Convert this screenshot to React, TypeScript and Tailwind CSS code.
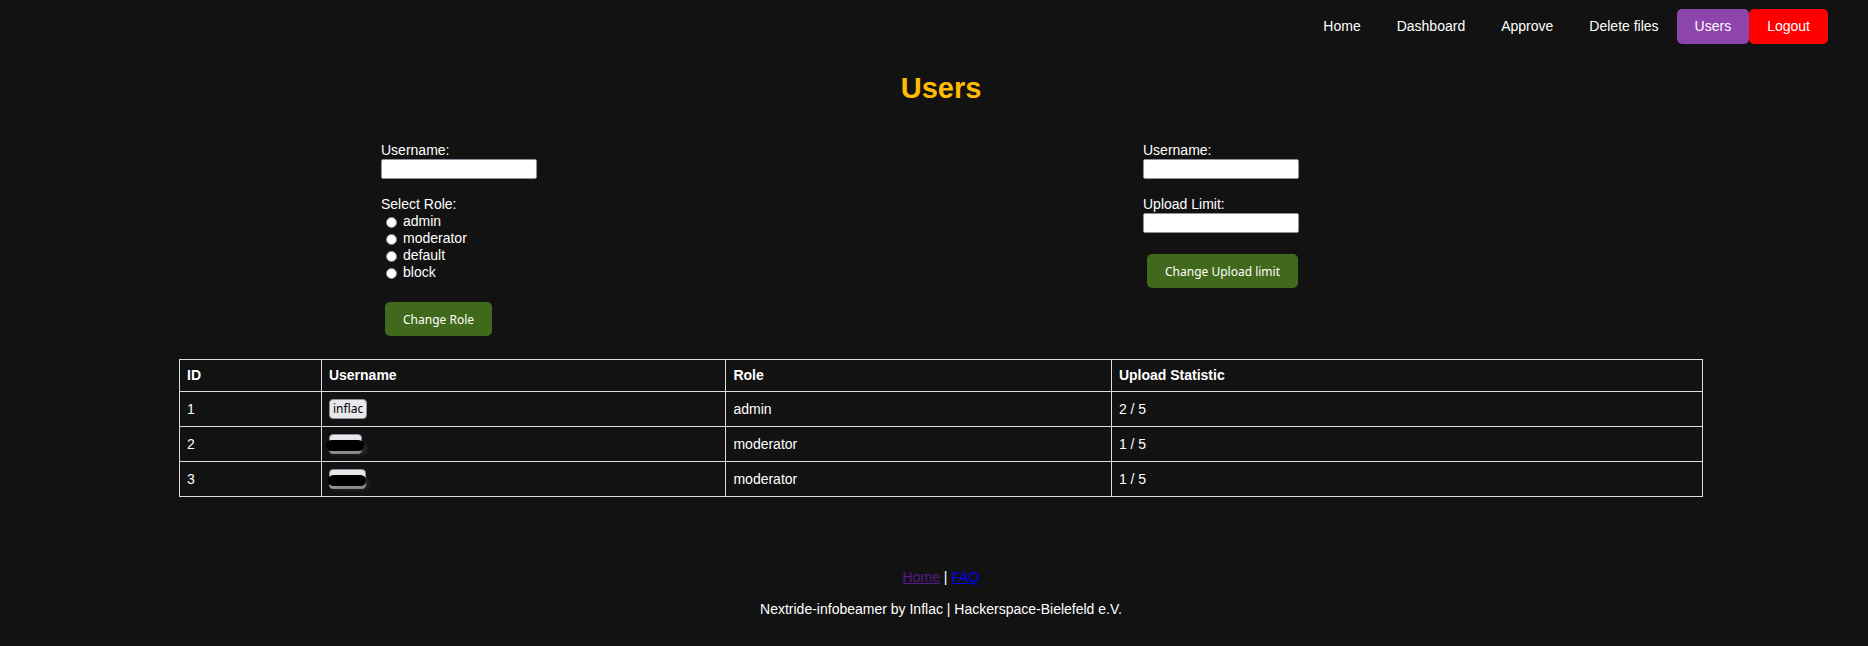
import type { ReactNode } from "react";

const links = ["Home", "Dashboard", "Approve", "Delete files"];
const roles = ["admin", "moderator", "default", "block"];

const field =
  "block h-5 w-[156px] rounded-[2px] border border-[#8f8f9d] bg-white px-1 text-[13px] text-black";

function SubmitButton({ children }: { children: ReactNode }) {
  return (
    <button
      type="submit"
      className="ml-1 h-[34px] rounded-[5px] bg-[#41691c] px-[18px] font-['Noto_Sans',sans-serif] text-[12px] text-white"
    >
      {children}
    </button>
  );
}

const userButton =
  "relative block h-5 rounded-[4px] border border-[#8f8f9d] font-['Noto_Sans',sans-serif] text-[12px] leading-[18px] text-black";

interface User {
  id: number;
  name: string;
  role: string;
  uploads: string;
  width?: string;
  bar?: string;
}

const users: User[] = [
  { id: 1, name: "inflac", role: "admin", uploads: "2 / 5" },
  { id: 2, name: "", role: "moderator", uploads: "1 / 5", width: "w-[33px]", bar: "-left-1 -right-[3px]" },
  { id: 3, name: "", role: "moderator", uploads: "1 / 5", width: "w-[37px]", bar: "-left-[2px] -right-px" },
];

function UserButton({ user }: { user: User }) {
  if (user.name) {
    return (
      <button type="button" className={userButton + " bg-[#e9e9ed] px-[3px]"}>
        {user.name}
      </button>
    );
  }
  return (
    <button
      type="button"
      aria-label="Concealed user"
      className={userButton + " bg-linear-to-b from-[#e9e9ed] from-30% to-[#a0a0a4] " + user.width}
    >
      <span
        className={
          "absolute top-[5px] h-[11px] rounded-full bg-black shadow-[3px_3px_4px_rgba(90,90,90,0.4)] " + user.bar
        }
      />
    </button>
  );
}

export default function App() {
  return (
    <div className="min-h-screen bg-[#121212] pl-3.5 font-['Liberation_Sans',Arial,sans-serif] text-[14px] leading-[17px] text-white">
      <nav className="flex justify-end pt-[9px] pr-10">
        {links.map((label) => (
          <a key={label} href="#" className="rounded-[5px] px-[18px] py-[9px]">
            {label}
          </a>
        ))}
        <a href="#" className="rounded-[5px] bg-[#8e44ad] px-[18px] py-[9px]">
          Users
        </a>
        <a href="#" className="rounded-[5px] bg-[#ff0000] px-[18px] py-[9px]">
          Logout
        </a>
      </nav>

      <main className="px-[165px]">
        <h1 className="pt-[27px] text-center text-[29px] leading-[34px] font-bold text-[#ffbb00]">Users</h1>

        <div className="grid grid-cols-2 pt-[37px]">
          <form className="pl-[202px]" onSubmit={(e) => e.preventDefault()}>
            <label htmlFor="role-user" className="block">
              Username:
            </label>
            <input id="role-user" type="text" className={field} />
            <fieldset className="pt-[17px]">
              <legend className="float-left w-full">Select Role:</legend>
              {roles.map((role) => (
                <div key={role} className="clear-both flex items-end gap-[6px] pl-[5px]">
                  <input
                    id={role}
                    type="radio"
                    name="role"
                    className="mb-[2px] size-[11px] appearance-none rounded-full border border-[#8f8f9d] bg-white checked:border-[3px] checked:border-[#0060df]"
                  />
                  <label htmlFor={role}>{role}</label>
                </div>
              ))}
            </fieldset>
            <div className="pt-[21px]">
              <SubmitButton>Change Role</SubmitButton>
            </div>
          </form>

          <form className="pl-[202px]" onSubmit={(e) => e.preventDefault()}>
            <label htmlFor="limit-user" className="block">
              Username:
            </label>
            <input id="limit-user" type="text" className={field} />
            <label htmlFor="limit" className="block pt-[17px]">
              Upload Limit:
            </label>
            <input id="limit" type="text" className={field} />
            <div className="pt-[21px]">
              <SubmitButton>Change Upload limit</SubmitButton>
            </div>
          </form>
        </div>

        <table className="mt-[23px] w-full table-fixed border-collapse text-left">
          <colgroup>
            <col className="w-[9.32%]" />
            <col className="w-[26.56%]" />
            <col className="w-[25.31%]" />
            <col />
          </colgroup>
          <thead>
            <tr className="h-8">
              {["ID", "Username", "Role", "Upload Statistic"].map((title) => (
                <th key={title} className="border border-[#dddddd] px-[7px] font-bold">
                  {title}
                </th>
              ))}
            </tr>
          </thead>
          <tbody>
            {users.map((user) => (
              <tr key={user.id} className="h-[35px]">
                <td className="border border-[#dddddd] px-[7px]">{user.id}</td>
                <td className="border border-[#dddddd] px-[7px]">
                  <UserButton user={user} />
                </td>
                <td className="border border-[#dddddd] px-[7px]">{user.role}</td>
                <td className="border border-[#dddddd] px-[7px]">{user.uploads}</td>
              </tr>
            ))}
          </tbody>
        </table>
      </main>

      <footer className="pt-[72px] text-center">
        <p>
          <a href="#" className="text-[#551a8b] underline">
            Home
          </a>{" "}
          |{" "}
          <a href="#" className="text-[#0000ee] underline">
            FAQ
          </a>
        </p>
        <p className="pt-[15px]">Nextride-infobeamer by Inflac | Hackerspace-Bielefeld e.V.</p>
      </footer>
    </div>
  );
}
